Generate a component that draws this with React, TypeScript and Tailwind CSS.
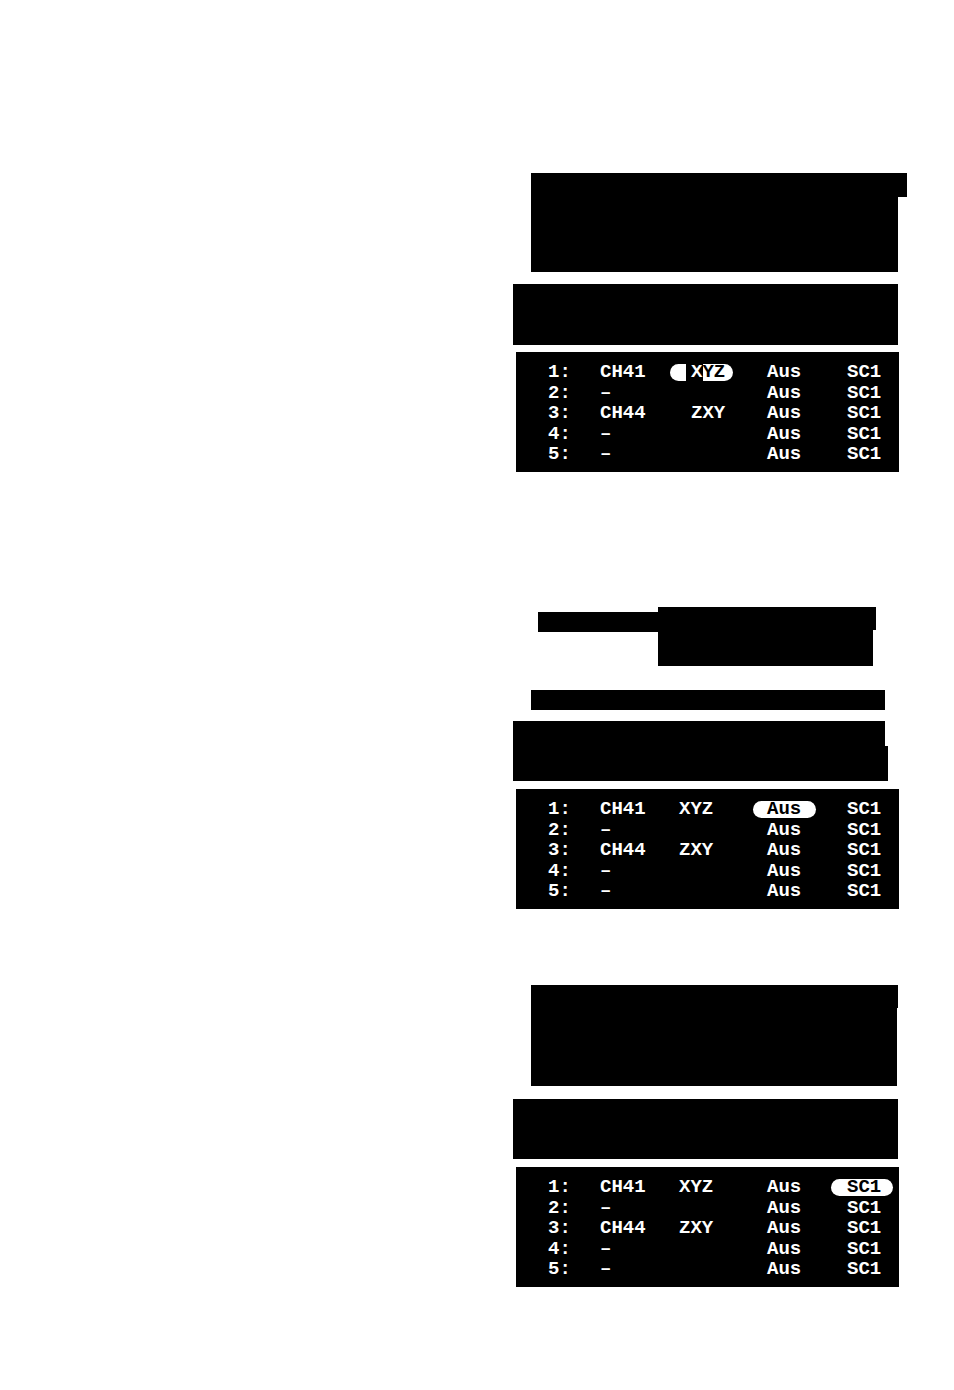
import React from "react";

type Row = [string, string, string, string, string];

const rows: Row[] = [
  ["1:", "CH41", "XYZ", "Aus", "SC1"],
  ["2:", "–", "", "Aus", "SC1"],
  ["3:", "CH44", "ZXY", "Aus", "SC1"],
  ["4:", "–", "", "Aus", "SC1"],
  ["5:", "–", "", "Aus", "SC1"],
];

function Pill({ left, width, children }: { left: string; width: string; children: React.ReactNode }) {
  return (
    <span className="relative inline-block">
      <span className={`absolute top-[2px] h-[17px] rounded-full bg-white ${left} ${width}`} />
      <span className="relative text-black">{children}</span>
    </span>
  );
}

function Table({ focus }: { focus: "name" | "audio" | "scart" }) {
  const wide = focus === "name";
  return (
    <div className="ml-[3px] w-[383px] h-[120px] bg-black pt-[10px] pl-[32px] text-white font-bold text-[19px] font-['Liberation_Mono',monospace]">
      {rows.map((r, i) => (
        <div key={i} className="flex leading-[20.5px] whitespace-pre">
          <div className="w-[52px]">{r[0]}</div>
          <div className={wide ? "w-[91px]" : "w-[79px]"}>{r[1]}</div>
          <div className={wide ? "w-[76px]" : "w-[88px]"}>
            {i === 0 && focus === "name" ? (
              <span className="relative inline-block">
                <span className="absolute top-[2px] left-[-21px] w-[16px] h-[17px] rounded-l-full bg-white" />
                <span className="absolute top-[2px] left-[12px] w-[30px] h-[17px] rounded-r-full bg-white" />
                <span className="relative text-white">X</span>
                <span className="relative text-black">YZ</span>
              </span>
            ) : (
              r[2]
            )}
          </div>
          <div className="w-[80px]">
            {i === 0 && focus === "audio" ? (
              <Pill left="left-[-14px]" width="w-[63px]">{r[3]}</Pill>
            ) : (
              r[3]
            )}
          </div>
          <div>
            {i === 0 && focus === "scart" ? (
              <Pill left="left-[-16px]" width="w-[62px]">{r[4]}</Pill>
            ) : (
              r[4]
            )}
          </div>
        </div>
      ))}
    </div>
  );
}

export default function App() {
  return (
    <div className="min-h-[1390px] bg-white pt-[173px]">
      <div className="ml-[513px] w-[400px] flex flex-col">
        {/* block 1 */}
        <div className="ml-[18px]">
          <div className="w-[376px] h-[24px] bg-black" />
          <div className="w-[367px] h-[75px] bg-black" />
        </div>
        <div className="mt-[12px] w-[385px] h-[61px] bg-black" />
        <div className="mt-[7px]">
          <Table focus="name" />
        </div>

        {/* block 2 */}
        <div className="mt-[135px] flex items-start">
          <div className="ml-[25px] mt-[5px] w-[120px] h-[20px] bg-black" />
          <div>
            <div className="w-[218px] h-[23px] bg-black" />
            <div className="w-[215px] h-[36px] bg-black" />
          </div>
        </div>
        <div className="mt-[24px] ml-[18px] w-[354px] h-[20px] bg-black" />
        <div className="mt-[11px]">
          <div className="w-[372px] h-[25px] bg-black" />
          <div className="w-[375px] h-[35px] bg-black" />
        </div>
        <div className="mt-[8px]">
          <Table focus="audio" />
        </div>

        {/* block 3 */}
        <div className="mt-[76px] ml-[18px]">
          <div className="w-[367px] h-[23px] bg-black" />
          <div className="w-[366px] h-[78px] bg-black" />
        </div>
        <div className="mt-[13px] w-[385px] h-[60px] bg-black" />
        <div className="mt-[8px]">
          <Table focus="scart" />
        </div>
      </div>
    </div>
  );
}
